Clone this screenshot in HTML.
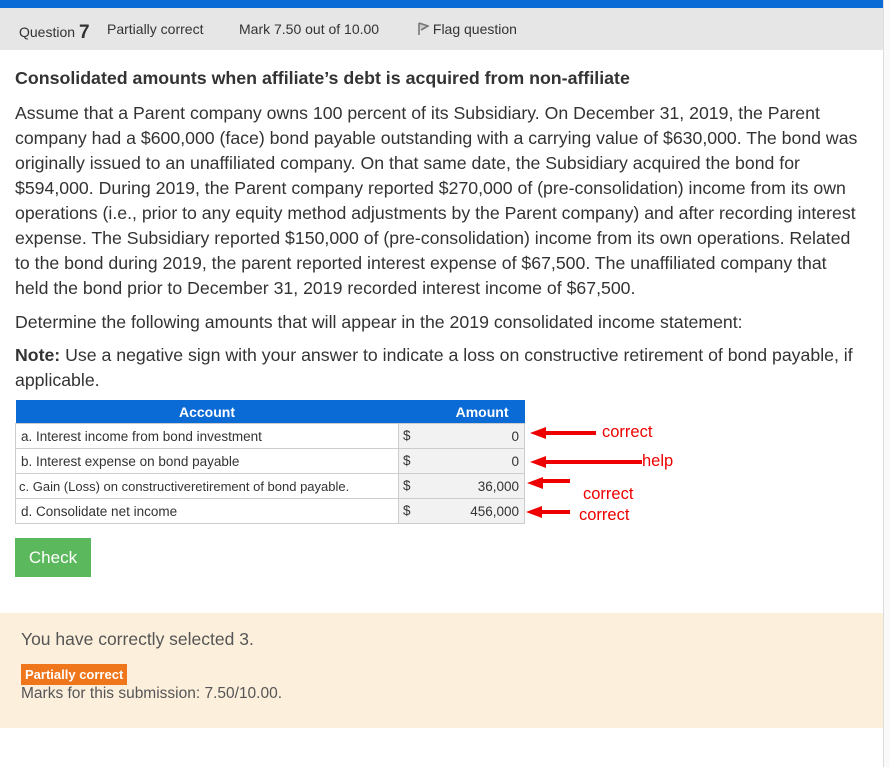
<!DOCTYPE html>
<html><head><style>
body{margin:0;width:890px;height:767px;background:#fff;font-family:"Liberation Sans",sans-serif;color:#333;position:relative;overflow:hidden}
.top{position:absolute;left:0;top:0;width:883px;height:8px;background:#0a6ad6}
.hdr{position:absolute;left:0;top:8px;width:883px;height:42px;background:#e6e6e6;font-size:14px;color:#333}
.hdr span{position:absolute;top:13px}
.right{position:absolute;left:883px;top:0;width:7px;height:767px;background:#fafafa;border-left:1px solid #ddd}
.t{position:absolute;left:15px;white-space:nowrap;font-size:17.7px;line-height:25px;color:#333}
table{position:absolute;left:15px;top:400px;border-collapse:collapse;font-size:13.5px;table-layout:fixed;width:509px}
th{background:#0a6ad6;color:#fff;height:23px;padding:0;font-size:14px}
td{border:1px solid #ccc;height:25px;padding:0 5px;box-sizing:border-box;white-space:nowrap}
td.d{background:#f2f2f2;text-align:right;position:relative}
td.d span{position:absolute;left:4px;top:4px}
.red{position:absolute;color:#e00;font-size:16.5px}
</style></head><body>
<div class="top"></div>
<div class="hdr">
<span style="left:19px">Question <b style="font-size:19px;position:relative;top:1px">7</b></span>
<span style="left:107px">Partially correct</span>
<span style="left:239px">Mark 7.50 out of 10.00</span>
<span style="left:417px"><svg width="12" height="14" viewBox="0 0 12 14" style="vertical-align:-2px"><path d="M2 1 L2 13 M2 1 L11 4 L4 8" stroke="#777" stroke-width="1.6" fill="#ccc"/></svg> Flag question</span>
</div>
<div class="right"></div>
<div class="t" style="top:66px;font-weight:bold;font-size:17.8px">Consolidated amounts when affiliate’s debt is acquired from non-affiliate</div>
<div class="t" style="top:101px">Assume that a Parent company owns 100 percent of its Subsidiary. On December 31, 2019, the Parent<br>company had a $600,000 (face) bond payable outstanding with a carrying value of $630,000. The bond was<br>originally issued to an unaffiliated company. On that same date, the Subsidiary acquired the bond for<br>$594,000. During 2019, the Parent company reported $270,000 of (pre-consolidation) income from its own<br>operations (i.e., prior to any equity method adjustments by the Parent company) and after recording interest<br>expense. The Subsidiary reported $150,000 of (pre-consolidation) income from its own operations. Related<br>to the bond during 2019, the parent reported interest expense of $67,500. The unaffiliated company that<br>held the bond prior to December 31, 2019 recorded interest income of $67,500.</div>
<div class="t" style="top:310px">Determine the following amounts that will appear in the 2019 consolidated income statement:</div>
<div class="t" style="top:343px"><b>Note:</b> Use a negative sign with your answer to indicate a loss on constructive retirement of bond payable, if<br>applicable.</div>
<table>
<colgroup><col style="width:383px"><col style="width:126px"></colgroup>
<tr><th>Account</th><th style="text-align:right;padding-right:16px">Amount</th></tr>
<tr><td>a. Interest income from bond investment</td><td class="d"><span>$</span>0</td></tr>
<tr><td>b. Interest expense on bond payable</td><td class="d"><span>$</span>0</td></tr>
<tr><td style="font-size:13px;padding:0 3px">c. Gain (Loss) on constructiveretirement of bond payable.</td><td class="d"><span>$</span>36,000</td></tr>
<tr><td>d. Consolidate net income</td><td class="d"><span>$</span>456,000</td></tr>
</table>
<svg style="position:absolute;left:0;top:0" width="890" height="767">
<g stroke="#e00" stroke-width="4" fill="#e00">
<path d="M540 433 L596 433"/><polygon points="530,433 546,427 546,439" stroke="none"/>
<path d="M540 462 L642 462"/><polygon points="530,462 546,456 546,468" stroke="none"/>
<path d="M538 481 L570 481"/><polygon points="527,483 543,477 543,489" stroke="none"/>
<path d="M538 512 L570 512"/><polygon points="526,512 542,506 542,518" stroke="none"/>
</g></svg>
<div class="red" style="left:602px;top:423px">correct</div>
<div class="red" style="left:642px;top:452px">help</div>
<div class="red" style="left:583px;top:485px">correct</div>
<div class="red" style="left:579px;top:506px">correct</div>
<div style="position:absolute;left:15px;top:538px;width:76px;height:39px;background:#5cb85c;color:#fff;font-size:17px;line-height:39px;text-align:center">Check</div>
<div style="position:absolute;left:0;top:613px;width:883px;height:115px;background:#fcefdc"></div>
<div class="t" style="left:21px;top:627px;font-size:17.5px;color:#555">You have correctly selected 3.</div>
<div style="position:absolute;left:21px;top:664px;background:#f0761c;color:#fff;font-weight:bold;font-size:13px;padding:0 4px;height:21px;line-height:21px">Partially correct</div>
<div class="t" style="left:21px;top:684px;font-size:15.5px;line-height:20px;color:#555">Marks for this submission: 7.50/10.00.</div>
</body></html>
